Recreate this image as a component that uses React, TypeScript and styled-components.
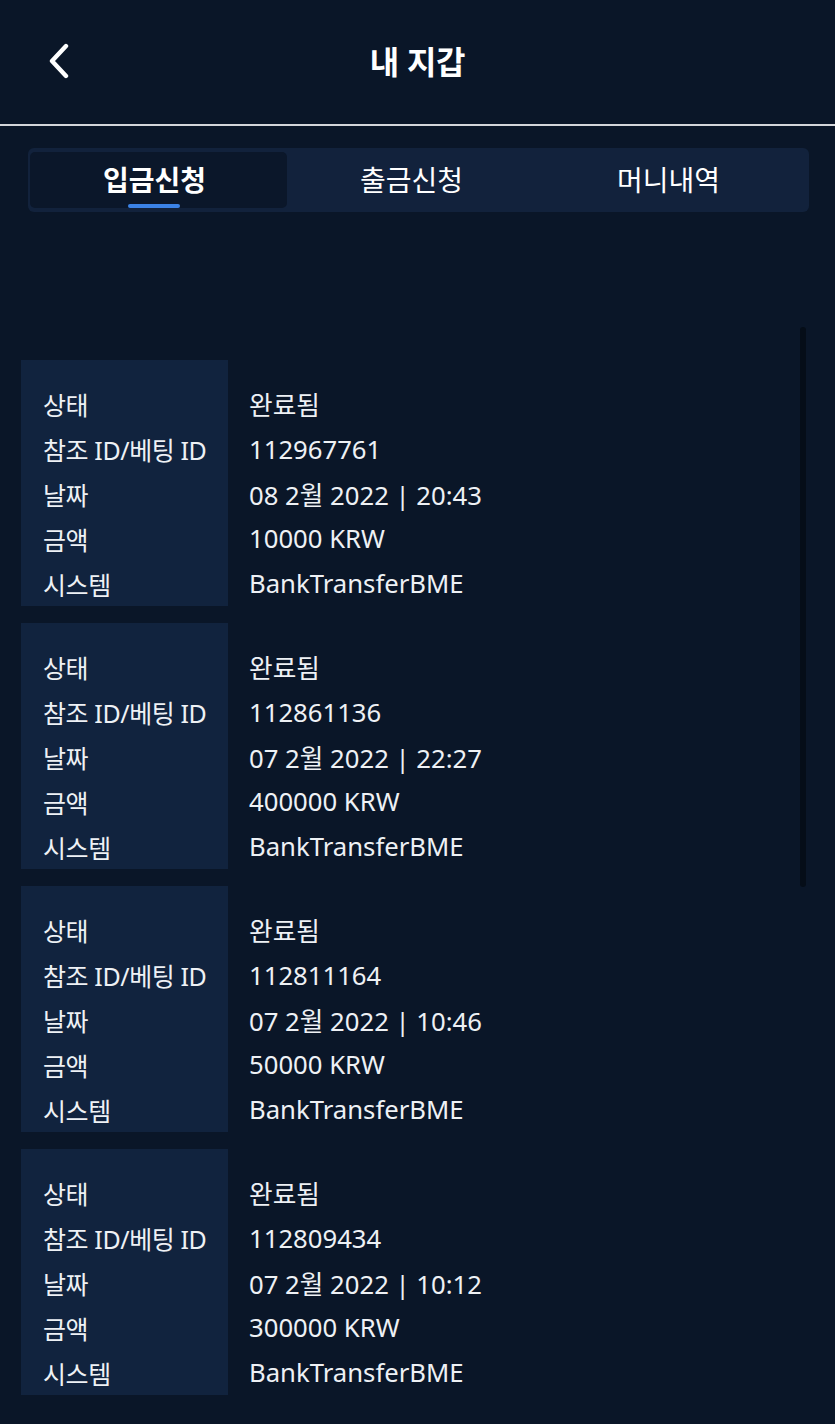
import React from "react";
import styled, { createGlobalStyle } from "styled-components";

const GlobalStyle = createGlobalStyle`
  html, body {
    margin: 0;
    padding: 0;
    background: #0a1628;
  }
  body {
    font-family: "Noto Sans", "Noto Sans CJK KR", sans-serif;
    color: #eef1f5;
  }
`;

type Record = {
  id: string;
  date: string;
  amount: string;
};

const records: Record[] = [
  { id: "112967761", date: "08 2월 2022 | 20:43", amount: "10000 KRW" },
  { id: "112861136", date: "07 2월 2022 | 22:27", amount: "400000 KRW" },
  { id: "112811164", date: "07 2월 2022 | 10:46", amount: "50000 KRW" },
  { id: "112809434", date: "07 2월 2022 | 10:12", amount: "300000 KRW" },
];

const tabs = ["입금신청", "출금신청", "머니내역"];

function App() {
  return (
    <Page>
      <GlobalStyle />
      <Header>
        <BackButton aria-label="back">
          <svg width="26" height="36" viewBox="0 0 26 36" fill="none">
            <polyline
              points="20,3 6,18 20,33"
              stroke="#ffffff"
              strokeWidth="4.4"
              strokeLinecap="round"
              strokeLinejoin="round"
            />
          </svg>
        </BackButton>
        <Title>내 지갑</Title>
      </Header>
      <Divider />
      <TabBar>
        {tabs.map((t, i) => (
          <Tab key={t} $active={i === 0}>
            {t}
            {i === 0 && <Indicator />}
          </Tab>
        ))}
      </TabBar>
      <ListArea>
        <List>
          {records.map((r) => (
            <Card key={r.id}>
              <Row>
                <Label>상태</Label>
                <Value>완료됨</Value>
              </Row>
              <Row>
                <Label>참조 ID/베팅 ID</Label>
                <Value>{r.id}</Value>
              </Row>
              <Row>
                <Label>날짜</Label>
                <Value>{r.date}</Value>
              </Row>
              <Row>
                <Label>금액</Label>
                <Value>{r.amount}</Value>
              </Row>
              <Row>
                <Label>시스템</Label>
                <Value>BankTransferBME</Value>
              </Row>
            </Card>
          ))}
        </List>
        <ScrollTrack />
      </ListArea>
    </Page>
  );
}

export default App;

const Page = styled.div`
  width: 835px;
  min-height: 1424px;
  background: #0a1628;
  overflow: hidden;
`;

const Header = styled.div`
  position: relative;
  height: 124px;
  display: flex;
  align-items: center;
  justify-content: center;
`;

const BackButton = styled.div`
  position: absolute;
  left: 46px;
  top: 43px;
  display: flex;
`;

const Title = styled.h1`
  margin: 0 0 4px;
  font-size: 32px;
  font-weight: 700;
  color: #ffffff;
  letter-spacing: -0.3px;
`;

const Divider = styled.div`
  height: 2px;
  background: #d3d6da;
`;

const TabBar = styled.div`
  margin: 22px 26px 0 28px;
  height: 64px;
  box-sizing: border-box;
  padding: 4px 2px;
  background: #12223c;
  border-radius: 6px;
  display: grid;
  grid-template-columns: repeat(3, 257px);
`;

const Tab = styled.div<{ $active?: boolean }>`
  position: relative;
  display: flex;
  align-items: center;
  justify-content: center;
  font-family: "Noto Sans CJK KR", sans-serif;
  font-size: 28px;
  font-weight: ${(p) => (p.$active ? 700 : 400)};
  color: #ffffff;
  background: ${(p) => (p.$active ? "#0b172a" : "transparent")};
  border-radius: 5px;
  padding: 0 8px 2px 0;
`;

const Indicator = styled.span`
  position: absolute;
  left: 98px;
  bottom: 0;
  width: 52px;
  height: 4px;
  border-radius: 2px;
  background: #3b82e6;
`;

const ListArea = styled.div`
  position: relative;
  padding: 148px 0 0 21px;
`;

const List = styled.div`
  display: flex;
  flex-direction: column;
  gap: 17px;
`;

const Card = styled.div`
  display: flex;
  flex-direction: column;
  padding-top: 22px;
  height: 246px;
  box-sizing: border-box;
  background: linear-gradient(to right, #11233e 0, #11233e 207px, transparent 207px);
`;

const Row = styled.div`
  display: grid;
  grid-template-columns: 207px 1fr;
  height: 45px;
  align-items: center;
  color: #eef1f5;
`;

const Label = styled.span`
  padding-left: 22px;
  white-space: nowrap;
  font-size: 25px;
  letter-spacing: -0.4px;
`;

const Value = styled.span`
  padding-left: 21px;
  white-space: nowrap;
  font-size: 25.7px;
`;

const ScrollTrack = styled.div`
  position: absolute;
  right: 29px;
  top: 115px;
  width: 6px;
  height: 560px;
  border-radius: 3px;
  background: #050d18;
`;
